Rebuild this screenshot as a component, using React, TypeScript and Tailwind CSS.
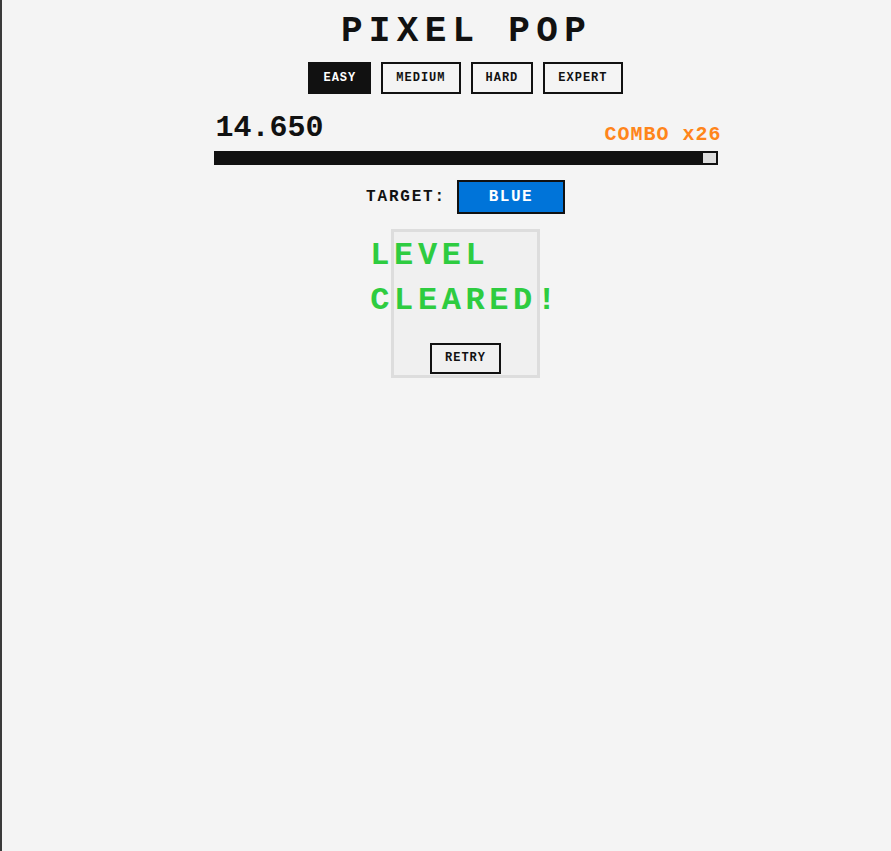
export default function App() {
  const mono = "font-['Courier_New','Liberation_Mono',monospace]";
  return (
    <div className={`flex min-h-[851px] bg-[#f4f4f4] text-[#111111] ${mono}`}>
      <div className="w-[2px] shrink-0 bg-[#3a3a3a]" />
      <main className="flex flex-1 flex-col items-center pl-[38px]">
        <h1 className="mt-[11px] mr-[-2px] text-[36px] font-bold leading-[41px] tracking-[6.3px]">
          PIXEL POP
        </h1>
        <div className="mt-[10px] flex gap-[10px]">
          {["EASY", "MEDIUM", "HARD", "EXPERT"].map((d, i) => (
            <button
              key={d}
              className={`h-[32px] border-2 border-[#111111] px-[13px] text-[12px] font-bold tracking-[1px] ${
                i === 0 ? "bg-[#111111] text-white" : "bg-transparent text-[#111111]"
              }`}
            >
              {d}
            </button>
          ))}
        </div>
        <div className="mt-[18px] flex h-[31px] w-[504px] items-start justify-between">
          <div className="mt-[1px] pl-[2px] text-[30px] font-bold leading-[30px]">14.650</div>
          <div className="mt-[12px] mr-[-4px] text-[20px] font-bold leading-[22px] tracking-[1px] text-[#ff851b]">
            COMBO x26
          </div>
        </div>
        <div className="mt-[8px] h-[14px] w-[504px] border-2 border-[#111111] bg-[#dddddd]">
          <div className="h-full bg-[#111111]" style={{ width: "97.5%" }} />
        </div>
        <div className="mt-[15px] flex items-center gap-[11px] pr-[2px]">
          <span className="ml-[2px] text-[16px] font-bold tracking-[1.8px]">TARGET:</span>
          <div className="flex h-[34px] w-[108px] items-center justify-center border-2 border-[#111111] bg-[#0074d9] text-[16px] font-bold tracking-[1.5px] text-white">
            BLUE
          </div>
        </div>
        <div className="relative mt-[15px] h-[149px] w-[149px] border-[3px] border-[#dddddd] bg-[#f0f0f0]">
          <div className="absolute inset-0 flex flex-col items-center justify-center">
            <div className="mt-[-1px] text-[32px] font-bold leading-[45px] tracking-[4.6px] text-[#2ecc40]">
              LEVEL CLEARED!
            </div>
            <button className="mt-[20px] h-[31px] border-2 border-[#111111] px-[13px] text-[12px] font-bold tracking-[1px]">
              RETRY
            </button>
          </div>
        </div>
      </main>
    </div>
  );
}
